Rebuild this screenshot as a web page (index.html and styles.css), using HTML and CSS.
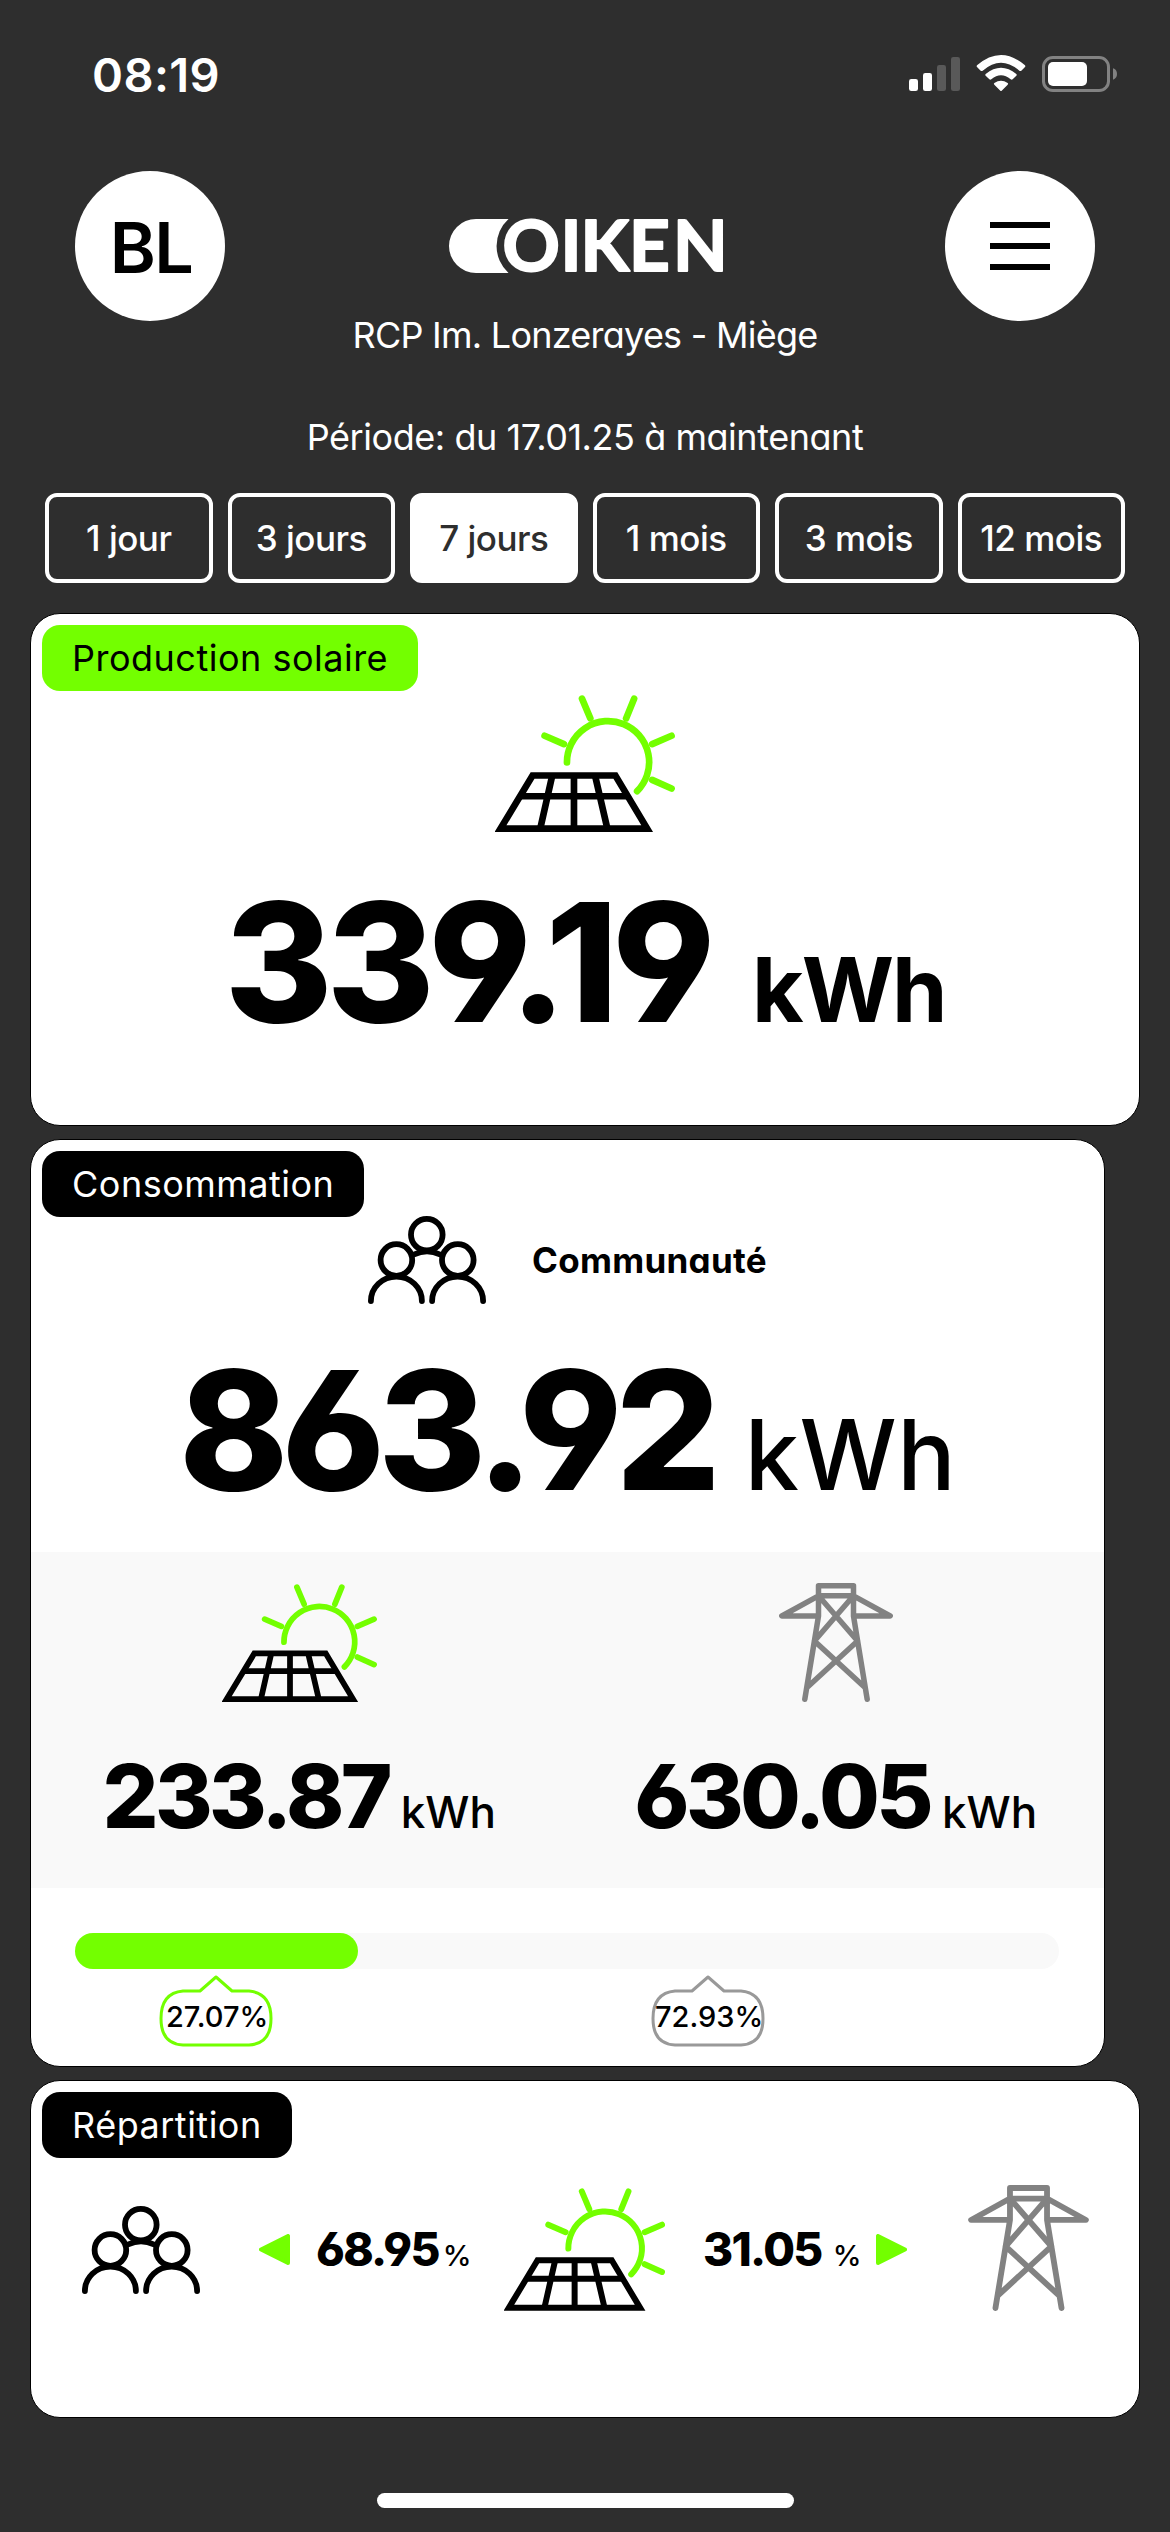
FILE: index.html
```html
<!DOCTYPE html>
<html lang="fr">
<head>
<meta charset="utf-8">
<title>OIKEN</title>
<link rel="stylesheet" href="styles.css">
</head>
<body>
<svg class="defs" width="0" height="0" aria-hidden="true">
  <symbol id="solar" viewBox="75 46 538 410">
    <g fill="none" stroke="#73ff00" stroke-width="20" stroke-linecap="round">
      <path d="M290 248A123 123 0 1 1 500 334"/>
      <path d="M335 57L360 116M491 57L467 116M223 168L281 193M603 168L545 193M603 326L545 300"/>
    </g>
    <g fill="none" stroke="#000" stroke-width="20">
      <path d="M187 287H435L530 446H91Z"/>
      <path d="M150 349H472M246 287L210 446M311 287V446M374 287L411 446"/>
    </g>
  </symbol>
  <symbol id="people" viewBox="0 0 118 88">
    <g fill="none" stroke="#000" stroke-width="5.8" stroke-linecap="round">
      <circle cx="58.8" cy="18.7" r="15.8"/><circle cx="28.4" cy="44" r="15.8"/><circle cx="89.800" cy="44" r="15.8"/>
      <path d="M2.900 85.100A25.500 24.500 0 0 1 53.900 85.100M64.100 85.100A25.500 24.500 0 0 1 115.100 85.100M46 38.500Q59 32 72 38.500"/>
    </g>
  </symbol>
  <symbol id="tower" viewBox="0 0 114 119">
    <path fill="none" stroke="#828282" stroke-width="5.500" stroke-linecap="round" stroke-linejoin="round" d="M25.800 116.200L39.500 33V2.800H74.500V33L88.200 116.200M39.500 12.800H74.500M39.500 12.800L2.800 33H39.500M74.500 12.800L111.200 33H74.500M39.500 12.800L78.600 58L28 104.500M74.500 12.800L35.400 58L86 104.500"/>
  </symbol>
  <symbol id="bubble" viewBox="0 0 114 72">
    <path fill="#fff" stroke="currentColor" stroke-width="3" stroke-linejoin="round" d="M24 16H41L57 2L73 16H90Q112 18 112 43.500T90 70H24Q2 69 2 43.500T24 16Z"/>
  </symbol>
</svg>

<header class="status">
  <span class="t clock">08:19</span>
  <svg class="signals" width="209" height="37" viewBox="0 0 627 111">
    <g fill="#fff"><rect x="0" y="72" width="27" height="36" rx="7"/><rect x="42" y="54" width="27" height="54" rx="7"/></g>
    <g fill="#595959"><rect x="84" y="30" width="27" height="78" rx="7"/><rect x="126" y="6" width="27" height="102" rx="7"/></g>
    <g fill="#fff">
      <path d="M204 31Q276-31 348 31Q350 34 348 36L337 47Q334 49 331 47Q276-1 221 47Q218 49 215 47L204 36Q202 34 204 31Z"/>
      <path d="M230 57Q276 20 322 57Q325 60 322 62L311 73Q308 75 305 73Q276 49 247 73Q244 75 241 73L230 62Q227 60 230 57Z"/>
      <path d="M256 84Q276 70 296 84Q299 86 296 89L278 107Q276 109 274 107L256 89Q253 86 256 84Z"/>
    </g>
    <rect x="403.500" y="7.500" width="195" height="99" rx="28" fill="none" stroke="#828282" stroke-width="9"/>
    <rect x="417" y="21" width="117" height="72" rx="15" fill="#fff"/>
    <path d="M612 40Q624 44 624 57T612 74Z" fill="#828282"/>
  </svg>
</header>

<div class="topbar">
  <div class="round avatar"><span class="t">BL</span></div>
  <svg class="logo" width="273" height="54" viewBox="0 0 273 54" role="img" aria-label="OIKEN">
    <path fill="#fff" d="M27 0H59.500A36.500 36.500 0 0 0 59.500 54H27A27 27 0 0 1 27 0Z"/>
    <text class="wordmark" y="52" x="53.5 111.500 131.500 180 224">OIKEN</text>
  </svg>
  <div class="round menu"><i></i><i></i><i></i></div>
</div>
<p class="line site"><span class="t">RCP Im. Lonzerayes - Miège</span></p>
<p class="line period"><span class="t">Période: du 17.01.25 à maintenant</span></p>

<nav class="tabs">
  <a><span class="t">1 jour</span></a><a><span class="t">3 jours</span></a><a class="on"><span class="t">7 jours</span></a><a><span class="t">1 mois</span></a><a><span class="t">3 mois</span></a><a><span class="t">12 mois</span></a>
</nav>

<main>
  <section class="card production">
    <h2 class="chip green"><span class="t">Production solaire</span></h2>
    <svg class="pic" width="180" height="137"><use href="#solar"/></svg>
    <p class="big"><b class="t">339.19</b><span class="t unit strong">kWh</span></p>
  </section>

  <section class="card usage">
    <h2 class="chip"><span class="t">Consommation</span></h2>
    <div class="who"><svg width="118" height="88"><use href="#people"/></svg><span class="t">Communauté</span></div>
    <p class="big"><b class="t">863.92</b><span class="t unit">kWh</span></p>
    <div class="split">
      <div><svg width="155" height="118"><use href="#solar"/></svg><p class="mid"><b class="t">233.87</b><span class="t">kWh</span></p></div>
      <div><svg width="114" height="119"><use href="#tower"/></svg><p class="mid"><b class="t">630.05</b><span class="t">kWh</span></p></div>
    </div>
    <div class="bar"><div style="width:28.8%"></div></div>
    <div class="marks">
      <div style="width:27.07%"><span class="mark sun"><svg width="114" height="72"><use href="#bubble"/></svg><span class="t">27.07%</span></span></div>
      <div style="width:72.93%"><span class="mark"><svg width="114" height="72"><use href="#bubble"/></svg><span class="t">72.93%</span></span></div>
    </div>
  </section>

  <section class="card share">
    <h2 class="chip"><span class="t">Répartition</span></h2>
    <div class="flow">
      <svg class="group" width="118" height="88"><use href="#people"/></svg>
      <svg class="tri" width="31" height="31" viewBox="0 0 31 31"><path d="M29 2V29L2 15.500Z"/></svg>
      <p class="pct"><b class="t">68.95</b><span class="t">%</span></p>
      <svg class="sunny" width="161" height="123"><use href="#solar"/></svg>
      <p class="pct wide"><b class="t">31.05</b><span class="t">%</span></p>
      <svg class="tri" width="31" height="31" viewBox="0 0 31 31"><path d="M2 2V29L29 15.500Z"/></svg>
      <svg width="121" height="126"><use href="#tower"/></svg>
    </div>
  </section>
</main>
<div class="home"></div>
</body>
</html>
```
FILE: styles.css
```css
* { box-sizing: border-box; }
html, body { margin: 0; }
body {
  width: 1170px;
  height: 2532px;
  overflow: hidden;
  display: flex;
  flex-direction: column;
  background: #2e2e2e;
  color: #fff;
  font-family: Inter, "Liberation Sans", sans-serif;
  font-size: 36px;
}
p, h2 { margin: 0; font-weight: 400; }
svg { display: block; flex: none; }
.defs { position: absolute; }
.t { white-space: nowrap; }

.status { height: 171px; padding: 55px 53px 0 92px; display: flex; justify-content: space-between; }
.clock { font-weight: 600; font-size: 47px; line-height: 39px; letter-spacing: 0.4px; }
.signals { margin-right: -1px; }

.topbar { height: 150px; padding: 0 75px; display: flex; justify-content: space-between; }
.round {
  width: 150px; height: 150px; border-radius: 50%; background: #fff; color: #000;
  display: flex; align-items: center; justify-content: center;
}
.avatar { font-size: 70px; font-weight: 600; padding: 3px 0 0 2px; letter-spacing: -1.5px; }
.menu { flex-direction: column; gap: 15px; }
.menu i { width: 60px; height: 6px; background: #000; }
.logo { margin-top: 48px; overflow: visible; }
.wordmark { font: 700 71px Lato, sans-serif; fill: #fff; stroke: #fff; stroke-width: 2px; stroke-linejoin: round; }

.line { height: 50px; line-height: 50px; text-align: center; font-feature-settings: "cv11", "cv03", "cv04"; }
.site { margin-top: -11px; letter-spacing: -0.75px; }
.period { margin-top: 52px; letter-spacing: -0.45px; }

.tabs { margin: 31px 45px 30px; display: flex; gap: 15px; height: 90px; flex: none; }
.tabs a {
  flex: 1; border: 4px solid #fff; border-radius: 12px; display: flex; align-items: center; justify-content: center;
  font-weight: 500; font-size: 35px; letter-spacing: -0.5px;
}
.tabs .on { background: #fff; color: #2e2e2e; }

main { display: flex; flex-direction: column; gap: 13px; padding: 0 30px; color: #000; }
.card { background: #fff; border: 1px solid #000; border-radius: 30px; width: 1110px; display: flex; flex-direction: column; align-items: center; }
.production { height: 513px; }
.usage { height: 928px; width: 1075px; }
.share { height: 338px; }
.chip {
  align-self: flex-start; margin: 11px 0 0 11px; height: 66px; padding: 0 30px; border-radius: 18px;
  background: #000; color: #fff; font-size: 36px; line-height: 66px; letter-spacing: 0.5px;
}
.green { background: #73ff00; color: #000; }
.pic { margin-top: 4px; }

.big, .mid, .pct, .who { font-feature-settings: "cv11", "cv03", "cv04"; }
.big { margin-top: 50px; height: 160px; line-height: 160px; display: flex; align-items: baseline; gap: 43px; font-size: 165px; letter-spacing: -6.5px; }
.big b { font-weight: 800; }
.unit { font-size: 97px; font-weight: 500; letter-spacing: 2px; }
.strong { font-size: 89px; font-weight: 700; letter-spacing: -2px; }

.who { margin-top: -1px; display: flex; align-items: center; gap: 46px; font-weight: 700; font-size: 35px; letter-spacing: 0.3px; }
.usage .big { margin-top: 46px; gap: 31px; letter-spacing: -7px; }
.usage .unit { letter-spacing: 0.5px; }
.split { align-self: stretch; margin-top: 42px; height: 336px; background: #f9f9f9; display: flex; }
.split > div { flex: 1; display: flex; flex-direction: column; align-items: center; justify-content: flex-end; padding-bottom: 52px; }
.mid { margin-top: 54px; height: 80px; line-height: 80px; display: flex; align-items: baseline; gap: 12px; font-size: 88px; letter-spacing: -3.7px; }
.mid b { font-weight: 800; }
.mid span { font-size: 44px; font-weight: 500; letter-spacing: 0; }

.bar { align-self: stretch; margin: 45px 45px 0 44px; height: 36px; border-radius: 18px; background: #f9f9f9; }
.bar div { height: 36px; border-radius: 18px; background: #73ff00; }
.marks { align-self: stretch; margin: 6px 37px 0 52px; display: flex; }
.marks > div { display: flex; justify-content: center; }
.mark { display: grid; color: #999; }
.mark > * { grid-area: 1 / 1; }
.mark .t { justify-self: center; padding: 16px 0 0 2px; line-height: 52px; font-size: 29px; font-weight: 500; color: #000; }
.mark.sun { color: #73ff00; }

.flow {
  align-self: stretch; display: grid; grid-template-columns: 177px 57px 188px 199px 173px 92px 121px;
  align-items: center; justify-items: start; padding-left: 51px; margin-top: 27px; height: 126px;
}
.tri { fill: #73ff00; stroke: #73ff00; stroke-width: 4px; stroke-linejoin: round; margin-top: 2px; }
.group { margin-top: 4px; }
.sunny { margin-top: 3px; }
.pct { display: flex; align-items: baseline; gap: 4px; font-size: 46px; line-height: 60px; letter-spacing: -1.7px; margin-top: 8px; }
.pct b { font-weight: 800; }
.pct span { font-size: 29px; font-weight: 500; letter-spacing: 0; }
.wide { gap: 11px; }

.home { width: 417px; height: 15px; border-radius: 8px; background: #fff; margin: 75px auto 0; }
```
